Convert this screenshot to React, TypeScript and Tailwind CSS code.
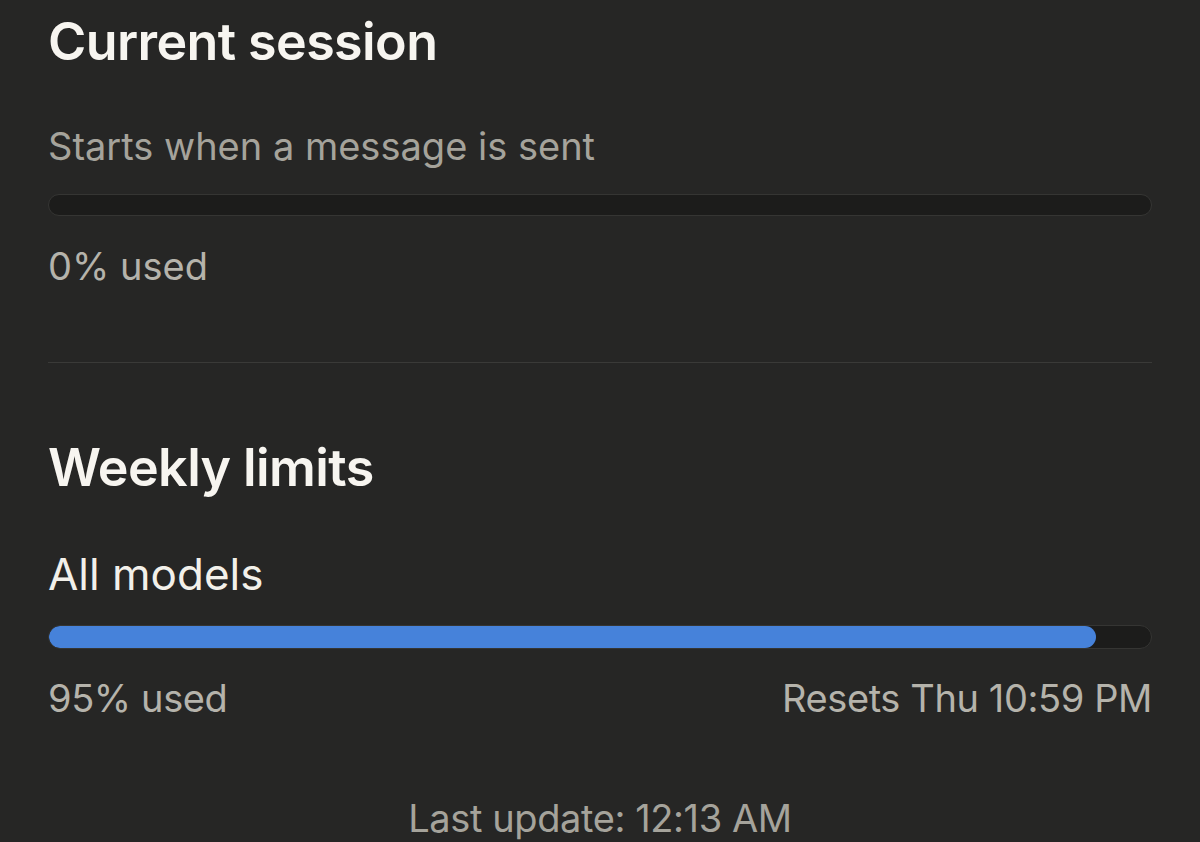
export default function App() {
  return (
    <div
      className="w-[1200px] h-[842px] overflow-hidden bg-[#262625] px-12"
      style={{ fontFamily: 'Inter, "Noto Sans", sans-serif' }}
    >
      <h1 className="pt-[10px] text-[52px] leading-[64px] font-semibold text-[#f7f5f0] tracking-[-0.6px]">
        Current session
      </h1>
      <p className="mt-[48px] text-[38px] leading-[48px] text-[#a5a39b]">Starts when a message is sent</p>
      <div className="mt-[24px] h-[22px] rounded-full bg-[#1c1c1b] border border-[#353533]" />
      <p className="mt-[26px] text-[38px] leading-[48px] text-[#b5b3ab]">0% used</p>
      <div className="mt-[72px] h-px bg-[#3a3a38]" />
      <h2 className="mt-[73px] text-[52px] leading-[64px] font-semibold text-[#f7f5f0] tracking-[-0.6px]">
        Weekly limits
      </h2>
      <p className="mt-[48px] text-[44px] leading-[52px] text-[#f2f0ea]">All models</p>
      <div className="mt-[25px] h-[24px] rounded-full bg-[#1c1c1b] border border-[#353533] overflow-hidden">
        <div className="h-full rounded-full bg-[#4682da]" style={{ width: '95%' }} />
      </div>
      <div className="mt-[25px] flex justify-between text-[38px] leading-[48px] text-[#b5b3ab] tracking-[-0.4px]">
        <span>95% used</span>
        <span>Resets Thu 10:59 PM</span>
      </div>
      <p className="mt-[72px] text-center text-[38px] leading-[48px] text-[#a5a39b] tracking-[-0.4px]">
        Last update: 12:13 AM
      </p>
    </div>
  );
}
